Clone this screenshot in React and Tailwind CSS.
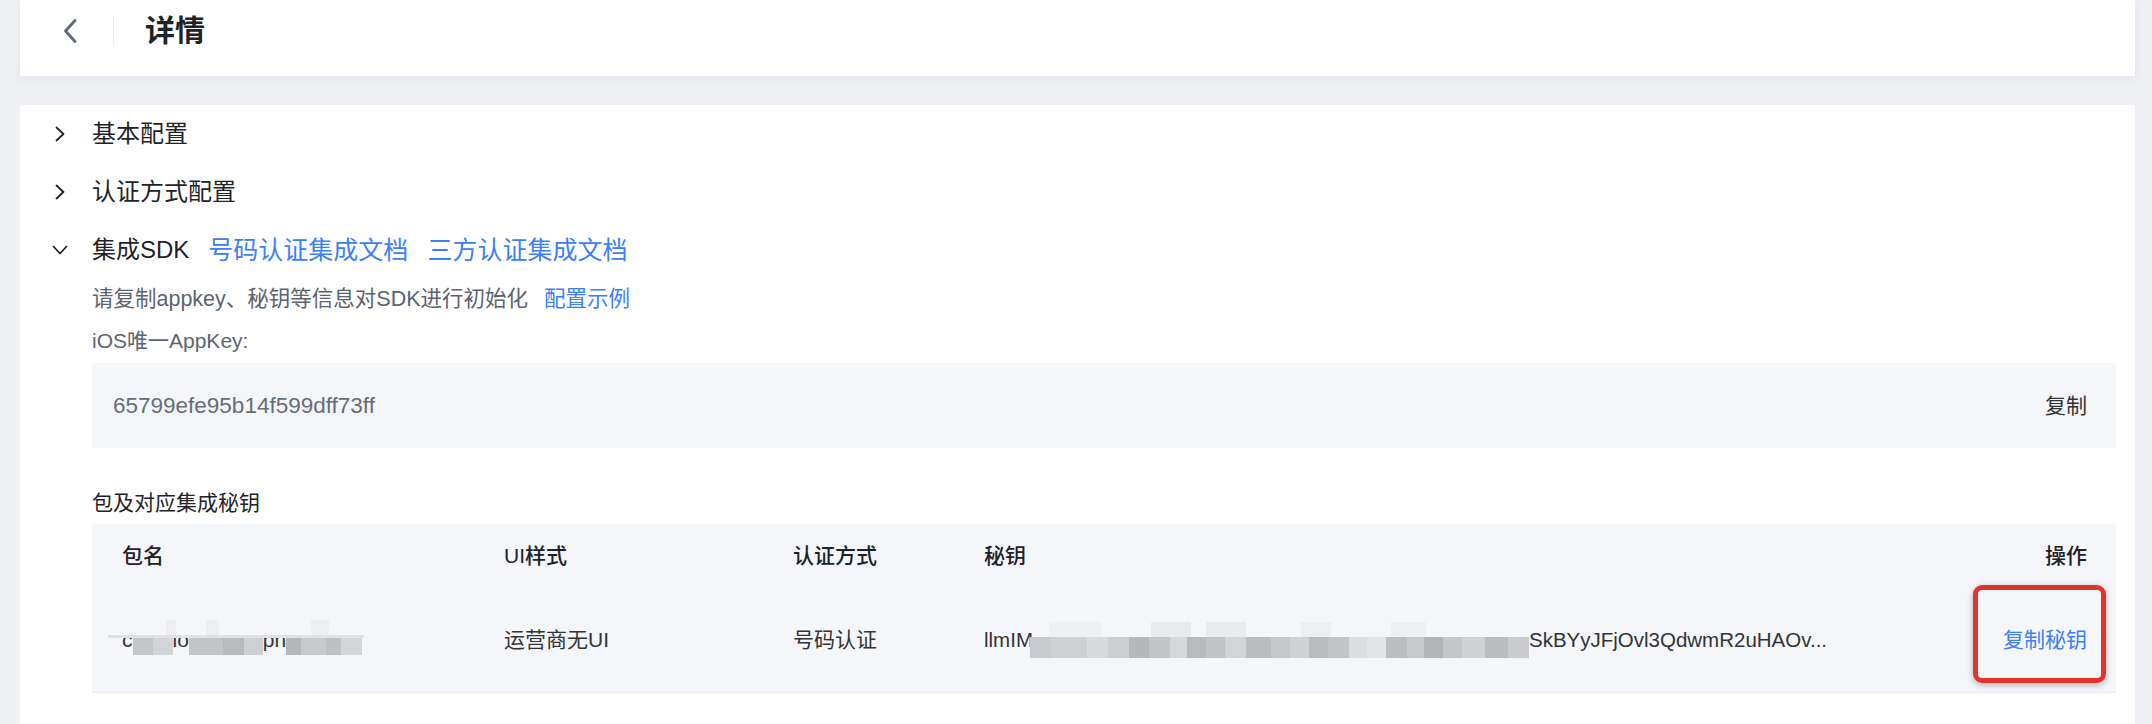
import React from "react";

const secretCells = [
  [21, "#c9cacd"], [36, "#cfd0d3"], [21, "#d9dadd"], [21, "#cdced1"], [20, "#b7b8bc"],
  [21, "#c4c5c9"], [17, "#d6d7da"], [19, "#b9babe"], [19, "#c2c3c7"], [21, "#d3d4d7"],
  [25, "#bbbcc0"], [19, "#c6c7ca"], [19, "#d0d1d4"], [19, "#b9babe"], [21, "#c3c4c8"],
  [18, "#dcdde0"], [19, "#e2e3e6"], [21, "#bdbec2"], [17, "#c8c9cc"], [19, "#b3b4b8"],
  [19, "#c5c6c9"], [23, "#d1d2d5"], [23, "#bbbcc0"], [21, "#cbccd0"],
];

const secretFaint = [
  [19, 52, "#eef0f3"], [121, 40, "#e8eaee"], [176, 40, "#e9ebef"], [271, 30, "#eceef1"], [361, 35, "#edeff2"],
];

function Cells({ cells }) {
  return (
    <div className="flex h-full">
      {cells.map(([w, c], i) => (
        <div key={i} className="h-full shrink-0" style={{ width: w, backgroundColor: c }} />
      ))}
    </div>
  );
}

function ChevronRight() {
  return (
    <svg width="12" height="16" viewBox="0 0 12 16" fill="none">
      <polyline points="2.5,1.5 9.5,8 2.5,14.5" stroke="#1f2329" strokeWidth="1.8" strokeLinecap="round" strokeLinejoin="round" />
    </svg>
  );
}

function ChevronDown() {
  return (
    <svg width="16" height="12" viewBox="0 0 16 12" fill="none">
      <polyline points="1.5,2.5 8,9.5 14.5,2.5" stroke="#1f2329" strokeWidth="1.8" strokeLinecap="round" strokeLinejoin="round" />
    </svg>
  );
}

function PackageName() {
  return (
    <div className="relative flex items-center text-[21px] leading-[24px] text-[#333]">
      <span>c</span>
      <div className="mt-[13px] h-[17px]">
        <Cells cells={[[20, "#c5c6ca"], [20, "#d3d4d7"]]} />
      </div>
      <span>io</span>
      <div className="mt-[13px] h-[17px]">
        <Cells cells={[[34, "#c3c4c8"], [21, "#b8babe"], [19, "#cfd0d3"]]} />
      </div>
      <span>pn</span>
      <div className="mt-[13px] h-[17px]">
        <Cells cells={[[15, "#b6b7bb"], [25, "#c8c9cc"], [15, "#bfc0c4"], [21, "#d4d5d8"]]} />
      </div>
      <div className="absolute left-[-14px] top-[10px] h-[3px] w-[256px] bg-[#e0e1e4]" />
      <div className="absolute left-[44px] top-[-5px] h-[15px] w-[10px] bg-[#eceef1]" />
      <div className="absolute left-[84px] top-[-5px] h-[15px] w-[13px] bg-[#eceef1]" />
      <div className="absolute left-[189px] top-[-5px] h-[15px] w-[18px] bg-[#eceef1]" />
    </div>
  );
}

function Secret() {
  return (
    <div className="flex items-center text-[20.5px] leading-[24px] text-[#333] whitespace-nowrap">
      <span>llmIM</span>
      <div className="relative -ml-[3px] mt-[15px] h-[21px] w-[499px] shrink-0">
        <Cells cells={secretCells} />
        {secretFaint.map(([l, w, c], i) => (
          <div key={i} className="absolute top-[-18px] h-[18px]" style={{ left: l, width: w, backgroundColor: c }} />
        ))}
      </div>
      <span>SkBYyJFjOvl3QdwmR2uHAOv...</span>
    </div>
  );
}

export default function App() {
  return (
    <div className="flex h-[724px] w-full flex-col overflow-hidden bg-[#eef0f4] pl-5 pr-[17px] font-['Liberation_Sans','Noto_Sans_CJK_SC',sans-serif] text-[#1f2329]">
      <header className="h-[76px] shrink-0 bg-white shadow-[0_3px_8px_rgba(30,40,60,0.06)]">
        <div className="flex h-[61px] items-center pl-[42px]">
          <svg width="16" height="26" viewBox="0 0 16 26" fill="none">
            <polyline points="13,2.5 3.5,13 13,23.5" stroke="#5f6b7f" strokeWidth="2.9" strokeLinecap="round" strokeLinejoin="round" />
          </svg>
          <div className="ml-[35px] h-[28px] w-px bg-[#e5e8ee]" />
          <h1 className="ml-[31px] text-[30px] font-semibold leading-none text-[#1f2329]">详情</h1>
        </div>
      </header>

      <main className="mt-[29px] flex-1 rounded-t-[3px] bg-white pr-[19px]">
        <div className="flex h-[58px] items-center pl-[32px]">
          <div className="flex w-4 justify-center"><ChevronRight /></div>
          <span className="ml-6 text-[24px] leading-none">基本配置</span>
        </div>
        <div className="flex h-[58px] items-center pl-[32px]">
          <div className="flex w-4 justify-center"><ChevronRight /></div>
          <span className="ml-6 text-[24px] leading-none">认证方式配置</span>
        </div>
        <div className="flex h-[58px] items-center pl-[32px]">
          <div className="flex w-4 justify-center"><ChevronDown /></div>
          <span className="ml-6 text-[24px] leading-none">集成SDK</span>
          <a className="ml-[19px] text-[25px] leading-none text-[#3b80f6]">号码认证集成文档</a>
          <a className="ml-[19px] text-[25px] leading-none text-[#3b80f6]">三方认证集成文档</a>
        </div>

        <div className="pl-[72px]">
          <div className="flex h-[40px] items-center text-[21.5px] text-[#5c6470]">
            <span>请复制appkey、秘钥等信息对SDK进行初始化</span>
            <a className="ml-[16px] text-[#3b80f6]">配置示例</a>
          </div>
          <div className="flex h-[44px] items-center text-[21px] text-[#5c6470]">iOS唯一AppKey:</div>
          <div className="flex h-[85px] items-center justify-between rounded-[2px] bg-[#f4f6fa] pl-[21px] pr-[29px]">
            <span className="text-[22.5px] text-[#666d78]">65799efe95b14f599dff73ff</span>
            <span className="text-[21px] text-[#333]">复制</span>
          </div>

          <div className="mt-[34px] flex h-[42px] items-center text-[21px] text-[#1f2329]">包及对应集成秘钥</div>

          <div className="rounded-t-[2px] border-b border-[#e6e9ef] bg-[#f4f6fa]">
            <div className="grid h-[64px] grid-cols-[382px_289px_191px_1fr_auto] items-center pl-[30px] pr-[29px] text-[21px] font-medium text-[#1d2129]">
              <div>包名</div>
              <div>UI样式</div>
              <div>认证方式</div>
              <div>秘钥</div>
              <div className="text-right">操作</div>
            </div>
            <div className="grid h-[104px] grid-cols-[382px_289px_191px_1fr_auto] items-center pl-[30px] pr-[29px] text-[21px] text-[#333]">
              <div><PackageName /></div>
              <div>运营商无UI</div>
              <div>号码认证</div>
              <div className="overflow-hidden"><Secret /></div>
              <div className="relative flex h-full items-center">
                <div className="absolute -left-[30px] -right-[19px] -top-[3px] bottom-[9px] rounded-[9px] border-[5px] border-[#e3342a] shadow-[0_2px_6px_rgba(0,0,0,0.28)]" />
                <a className="text-[#3b80f6]">复制秘钥</a>
              </div>
            </div>
          </div>
        </div>
      </main>
    </div>
  );
}
